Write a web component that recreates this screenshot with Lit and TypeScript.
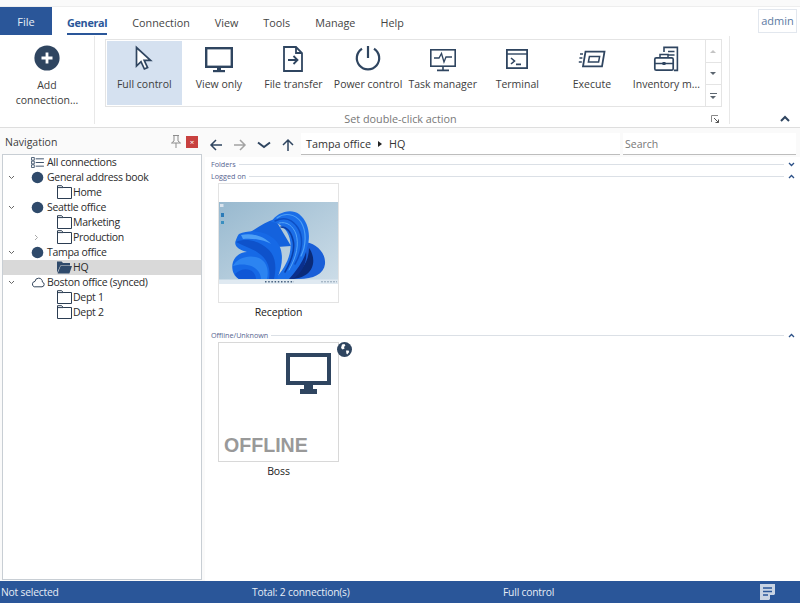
import { LitElement, html, css, svg } from "lit";
import { customElement } from "lit/decorators.js";

const INK = "#2f4560";

const actionIcons: Record<string, unknown> = {
  cursor: svg`<path d="M8.5 4.5 V23 L13 18.6 L16.4 26 L19.6 24.6 L16.2 17.4 H22.6 Z" fill="#fff" stroke="${INK}" stroke-width="1.7" stroke-linejoin="miter"/>`,
  monitor: svg`<rect x="3.2" y="5.2" width="25.6" height="18.6" fill="none" stroke="${INK}" stroke-width="2.4"/><rect x="14" y="25" width="4" height="3" fill="${INK}"/><rect x="10" y="27" width="12" height="2.2" fill="${INK}"/>`,
  file: svg`<path d="M7 4 H19 L25 10 V28 H7 Z M19 4 V10 H25" fill="none" stroke="${INK}" stroke-width="1.8"/><path d="M11 17 H20 M16.5 13 L20.5 17 L16.5 21" fill="none" stroke="${INK}" stroke-width="1.8"/>`,
  power: svg`<path d="M10 5.7 A11.2 11.2 0 1 0 22 5.7" fill="none" stroke="${INK}" stroke-width="2.2"/><path d="M16 3 V15" stroke="${INK}" stroke-width="2.2"/>`,
  task: svg`<rect x="3.8" y="6.8" width="24.4" height="16.4" fill="none" stroke="${INK}" stroke-width="1.6"/><path d="M7 15 H12 L14.5 10.5 L17 19 L19 14 H25" fill="none" stroke="${INK}" stroke-width="1.3"/><path d="M16 23 V27 M10 27.4 H22" stroke="${INK}" stroke-width="1.6"/>`,
  terminal: svg`<rect x="5.9" y="6.9" width="20.2" height="18.2" fill="none" stroke="${INK}" stroke-width="1.8"/><path d="M6 11 H26" stroke="${INK}" stroke-width="1.4"/><path d="M10 15 L13.5 18 L10 21 M15 21.4 H20" fill="none" stroke="${INK}" stroke-width="1.6"/>`,
  execute: svg`<path d="M9.5 8.6 H28.5 L26 23.4 H7 Z" fill="none" stroke="${INK}" stroke-width="1.8"/><path d="M13.4 13.6 H23.6 L22.6 19 H12.4 Z" fill="none" stroke="${INK}" stroke-width="1.5"/><path d="M4 11 H7 M3.4 15 H6.4 M2.8 19 H5.8" stroke="${INK}" stroke-width="1.3"/>`,
  inventory: svg`<path d="M14 9 V4.4 H27.4 V27.4 H24" fill="none" stroke="${INK}" stroke-width="1.6"/><path d="M18 8.5 H24.5 M18 12 H24.5" stroke="${INK}" stroke-width="1.3"/><rect x="4.8" y="14.8" width="18.4" height="12.4" rx="1.5" fill="#fff" stroke="${INK}" stroke-width="1.7"/><path d="M10 14.5 V11.4 H18 V14.5 M5 20.4 H23" fill="none" stroke="${INK}" stroke-width="1.5"/><rect x="12.5" y="19" width="3" height="3" fill="${INK}"/>`,
};

const actions = [
  { label: "Full control", icon: "cursor", active: true },
  { label: "View only", icon: "monitor" },
  { label: "File transfer", icon: "file" },
  { label: "Power control", icon: "power" },
  { label: "Task manager", icon: "task" },
  { label: "Terminal", icon: "terminal" },
  { label: "Execute", icon: "execute" },
  { label: "Inventory m...", icon: "inventory" },
];

type Node = { label: string; kind: string; twist?: string; selected?: boolean };

const tree: Node[] = [
  { label: "All connections", kind: "list" },
  { label: "General address book", kind: "dot", twist: "open" },
  { label: "Home", kind: "folder" },
  { label: "Seattle office", kind: "dot", twist: "open" },
  { label: "Marketing", kind: "folder" },
  { label: "Production", kind: "folder", twist: "closed" },
  { label: "Tampa office", kind: "dot", twist: "open" },
  { label: "HQ", kind: "folder-open", selected: true },
  { label: "Boston office (synced)", kind: "cloud", twist: "open" },
  { label: "Dept 1", kind: "folder" },
  { label: "Dept 2", kind: "folder" },
];

const nodeIcons: Record<string, unknown> = {
  list: html`<svg width="13" height="11" viewBox="0 0 14 12"><path d="M.5.5h3v3h-3zM.5 4.5h3v3h-3zM.5 8.5h3v3h-3z" fill="none" stroke="${INK}" stroke-width=".9"/><path d="M5 2h9M5 6h9M5 10h9" stroke="${INK}" stroke-width="1"/></svg>`,
  dot: html`<svg width="13" height="13" viewBox="0 0 13 13"><circle cx="6.5" cy="6.5" r="5.8" fill="#2f4a6b"/></svg>`,
  cloud: html`<svg width="14" height="11" viewBox="0 0 14 11"><path d="M3.2 9.8H11a2.4 2.4 0 0 0 .4-4.7A3.6 3.6 0 0 0 7.6 1.2 3.6 3.6 0 0 0 4 4.4 2.8 2.8 0 0 0 3.2 9.8Z" fill="none" stroke="#34465c" stroke-width="1"/></svg>`,
  folder: html`<svg width="15" height="14" viewBox="0 0 15 14"><path d="M.5 13.5V.7h4.2l1.4 1.8h8.4v11Z" fill="#fff" stroke="#2b3d52" stroke-width="1"/><path d="M.5 2.6h5.6" stroke="#2b3d52" stroke-width="1"/></svg>`,
  "folder-open": html`<svg width="15" height="14" viewBox="0 0 15 14"><path d="M0 13V1.500h4.600L6 3h7v2.400H3.400L0 13Z" fill="#2f4a6b"/><path d="M.6 13.400 3.600 6H15l-2.600 7.400Z" fill="#2f4a6b"/></svg>`,
};

@customElement("app-root")
export class AppRoot extends LitElement {
  render() {
    return html`
      <div class="tabs">
        <div class="file">File</div>
        <nav class="tab-list">
          ${["General", "Connection", "View", "Tools", "Manage", "Help"].map(
            (t, i) => html`<span class="tab ${i === 0 ? "current" : ""}">${t}</span>`
          )}
        </nav>
        <div class="admin">admin</div>
      </div>
      ${this.renderRibbon()}
      <div class="body">
        ${this.renderNav()}
        <main class="content">
          <div class="toolbar">
            ${this.renderArrows()}
            <div class="address"><span>Tampa office</span><i class="crumb"></i><span>HQ</span></div>
            <div class="search">Search</div>
          </div>
          <div class="groups">
            ${this.groupHead("Folders", false)} ${this.groupHead("Logged on", true)}
            <div class="cards">
              <figure class="card">
                <div class="tile online">${this.renderWallpaper()}</div>
                <figcaption>Reception</figcaption>
              </figure>
            </div>
            ${this.groupHead("Offline/Unknown", true)}
            <div class="cards">
              <figure class="card">
                <div class="tile offline">
                  <svg class="big-monitor" width="45" height="41" viewBox="0 0 45 41">
                    <path fill-rule="evenodd" d="M0 0H45V32H0ZM4 4V28H41V4Z" fill="${INK}" />
                    <rect x="18" y="32" width="9" height="5" fill="${INK}" />
                    <rect x="14" y="36" width="17" height="5" fill="${INK}" />
                  </svg>
                  <span class="offline-text">OFFLINE</span>
                  <svg class="globe" width="15" height="15" viewBox="0 0 15 15">
                    <circle cx="7.5" cy="7.5" r="7.5" fill="${INK}" />
                    <path d="M5 2.6 7.4 2 8.4 3.4 7 5 7.6 6.4 5.600 7.400 4 6ZM9 8.600 11.600 8.400l.6 1.600-2 2.400-.8-.8Z" fill="#fff" />
                  </svg>
                </div>
                <figcaption>Boss</figcaption>
              </figure>
            </div>
          </div>
        </main>
      </div>
      <footer class="status">
        <span class="s1">Not selected</span>
        <span class="s2">Total: 2 connection(s)</span>
        <span class="s3">Full control</span>
        <svg class="note" width="15" height="16" viewBox="0 0 15 16">
          <path d="M0 0H15V10L9 16H0Z" fill="#c9d4e4" />
          <path d="M3 4H12M3 7.500H12M3 11H8" stroke="#2a5699" stroke-width="1.600" />
          <path d="M15 11 10 16V11Z" fill="#2a5699" />
        </svg>
      </footer>
    `;
  }

  renderRibbon() {
    return html`
      <section class="ribbon">
        <div class="add">
          <svg width="26" height="26" viewBox="0 0 26 26">
            <circle cx="13" cy="13" r="12.6" fill="#2f4560" />
            <path d="M13 7.5V18.5M7.5 13H18.5" stroke="#fff" stroke-width="2.8" />
          </svg>
          <span>Add<br />connection...</span>
        </div>
        <div class="action-group">
          <div class="gallery">
            <div class="actions">
              ${actions.map(
                (a) => html`<div class="action ${a.active ? "active" : ""}">
                  <svg width="32" height="32" viewBox="0 0 32 32">${actionIcons[a.icon]}</svg>
                  <span>${a.label}</span>
                </div>`
              )}
            </div>
            <div class="spin">
              <div><i class="up"></i></div>
              <div><i class="down"></i></div>
              <div class="more"><i class="bar"></i><i class="down"></i></div>
            </div>
          </div>
          <div class="caption">
            <span>Set double-click action</span>
            <svg class="launcher" width="8" height="8" viewBox="0 0 8 8">
              <path d="M.5 7V.5H7" fill="none" stroke="#8a8a8a" />
              <path d="M3 3 7.5 7.5M7.5 4.5v3h-3" fill="none" stroke="#555" />
            </svg>
          </div>
        </div>
        <div class="collapse">
          <svg width="10" height="7" viewBox="0 0 10 7"><path d="M1 6 5 2l4 4" fill="none" stroke="#2f4560" stroke-width="2" /></svg>
        </div>
      </section>
    `;
  }

  renderNav() {
    return html`
      <aside class="nav">
        <header class="nav-head">
          <span>Navigation</span>
          <svg width="12" height="13" viewBox="0 0 12 13">
            <path d="M3 .5H9M4 .5V6L1.5 8H10.5L8 6V.5M6 8V13" fill="none" stroke="#8d8d8d" />
          </svg>
          <div class="close">×</div>
        </header>
        <div class="tree">
          ${tree.map(
            (n) => html`<div class="row ${n.kind.startsWith("folder") ? "leaf" : "root"} ${n.selected ? "selected" : ""}">
              <span class="twist">
                ${n.twist === "open"
                  ? html`<svg width="7" height="5" viewBox="0 0 7 5"><path d="M1 1l2.5 2.5L6 1" fill="none" stroke="#666" /></svg>`
                  : n.twist === "closed"
                    ? html`<svg width="5" height="7" viewBox="0 0 5 7"><path d="M1 1l2.5 2.5L1 6" fill="none" stroke="#aaa" /></svg>`
                    : ""}
              </span>
              <span class="node-icon">${nodeIcons[n.kind]}</span>
              <span>${n.label}</span>
            </div>`
          )}
        </div>
      </aside>
    `;
  }

  renderArrows() {
    const arrow = (rot: number, col: string) =>
      html`<svg width="14" height="14" viewBox="0 0 14 14" style="transform: rotate(${rot}deg)">
        <path d="M13 7H2M7 2 2 7l5 5" fill="none" stroke="${col}" stroke-width="1.5" />
      </svg>`;
    return html`
      <div class="arrows">
        ${arrow(0, INK)} ${arrow(180, "#a3a3a3")}
        <svg width="14" height="14" viewBox="0 0 14 14"><path d="M1 4.5 7 9l6-4.5" fill="none" stroke="${INK}" stroke-width="2" /></svg>
        ${arrow(90, INK)}
      </div>
    `;
  }

  groupHead(label: string, open: boolean) {
    return html`<div class="group-head">
      <span>${label}</span><i class="rule"></i>
      <svg width="7" height="5" viewBox="0 0 7 5"><path d="${open ? "M1 4 3.5 1.5 6 4" : "M1 1 3.5 3.5 6 1"}" fill="none" stroke="#2a4f86" stroke-width="1.3" /></svg>
    </div>`;
  }

  renderWallpaper() {
    return html`<svg class="wall" width="119" height="82" viewBox="0 0 119 82">
      <defs>
        <linearGradient id="sky" x1="0" y1="0" x2="1" y2="1">
          <stop offset="0" stop-color="#98b9cf" />
          <stop offset="1" stop-color="#cddde8" />
        </linearGradient>
      </defs>
      <rect width="119" height="82" fill="url(#sky)" />
      <path d="M84 40C96 40 107 50 106 62 105 72 94 77 80 77H56C72 72 82 58 84 40Z" fill="#1a5fd8" />
      <path d="M70 77C82 70 90 60 90 46 96 54 96 66 88 72 84 75 78 77 70 77Z" fill="#0a2a78" />
      <path d="M62 77C76 68 84 56 86 44 90 58 84 70 74 77Z" fill="#0b2f8c" />
      <path d="M28 32C38 26 46 20 56 17L72 44 44 46Z" fill="#1462dd" />
      <path d="M52 20C58 10 72 6 80 12 90 20 92 34 88 46 86 56 80 66 70 77H56C70 62 76 44 68 30 64 24 58 20 52 20Z" fill="#1b6ee8" />
      <g fill="none" stroke-linecap="round">
        <path d="M58 16C66 10 76 12 82 20 88 30 87 44 82 54" stroke="#4d9ff6" stroke-width="1.2" />
        <path d="M56 19C66 14 74 18 79 26 85 36 83 50 76 62" stroke="#0d4fc4" stroke-width="1.5" />
        <path d="M60 21C68 19 74 24 77 32 80 42 78 54 70 68" stroke="#56a6f8" stroke-width="1" />
        <path d="M62 25C68 25 72 30 74 38 76 46 74 56 66 70" stroke="#0a3fa8" stroke-width="1.6" />
      </g>
      <path d="M20 32C30 28 44 28 54 36 64 44 66 58 58 77H20C14 74 12 66 14 60 16 54 22 50 28 50 20 48 14 44 17 38 18 35 19 33 20 32Z" fill="#1669e6" />
      <path d="M17 40C26 36 40 38 50 48 56 54 58 64 55 77H50C52 66 48 56 38 50 32 46 24 44 17 40Z" fill="#0e52cb" />
      <path d="M22 33C32 31 44 33 52 42 46 38 34 36 24 37Z" fill="#4d9ff6" />
      <path d="M14 64C18 56 30 52 40 56 48 60 50 68 48 77H42C42 70 36 64 28 63 22 62 18 63 14 64Z" fill="#2c84f1" />
      <path d="M16 72C22 66 30 66 34 70 36 72 37 75 37 77H20C18 76 17 74 16 72Z" fill="#0f57d6" />
      <rect x="1" y="2" width="3.5" height="3" fill="#e8eef4" opacity=".8" />
      <rect x="2" y="11" width="3" height="4" fill="#2b7bb8" />
      <rect x="2" y="19" width="3" height="3" fill="#3a8fc0" />
      <rect y="77.5" width="119" height="4.5" fill="#dfe9f1" />
      <path d="M46 79.8H75" stroke="#45607f" stroke-width="1.4" stroke-dasharray="1.5 1.7" />
      <path d="M102 79.8H118" stroke="#8fa3b6" stroke-width="1" stroke-dasharray="2 1" />
    </svg>`;
  }

  static styles = css`
    :host {
      display: flex;
      flex-direction: column;
      height: 603px;
      width: 800px;
      overflow: hidden;
      background: #fafafa;
      color: #3d3d3d;
      font-family: "Open Sans", "Noto Sans", sans-serif;
      font-size: 10.5px;
    }
    .tabs {
      display: flex;
      height: 29px;
      margin-top: 6px;
      border-top: 1px solid #eee;
      background: #fff;
      box-sizing: border-box;
      align-items: stretch;
    }
    .file {
      width: 52px;
      background: #2a5699;
      color: #e8eef6;
      display: flex;
      align-items: center;
      justify-content: center;
      font-size: 11px;
    }
    .tab-list {
      display: flex;
      gap: 25px;
      padding-left: 15px;
      flex: 1;
      font-size: 10.8px;
    }
    .tab {
      line-height: 32px;
      height: 28px;
      color: #444;
      box-sizing: border-box;
    }
    .tab.current {
      color: #2a5699;
      font-weight: 700;
      letter-spacing: -0.3px;
      border-bottom: 2px solid #2a5699;
    }
    .admin {
      align-self: flex-start;
      margin: 2px 3px 0 0;
      width: 39px;
      height: 24px;
      box-sizing: border-box;
      border: 1px solid #e2e7ee;
      color: #5b7aa3;
      font-size: 11px;
      text-align: center;
      line-height: 22px;
    }
    .ribbon {
      display: flex;
      height: 93px;
      background: #fff;
      box-sizing: border-box;
      border-bottom: 1px solid #dedede;
      padding-top: 1px;
    }
    .add {
      width: 95px;
      height: 88px;
      box-sizing: border-box;
      border-right: 1px solid #e8e8e8;
      display: flex;
      flex-direction: column;
      align-items: center;
      padding-top: 9px;
      text-align: center;
      line-height: 15px;
      gap: 7px;
    }
    .action-group {
      width: 635px;
      height: 88px;
      box-sizing: border-box;
      border-right: 1px solid #e8e8e8;
      padding: 3px 8px 0 10px;
    }
    .gallery {
      display: flex;
      height: 68px;
      box-sizing: border-box;
      border: 1px solid #e4e4e4;
      width: 617px;
    }
    .actions {
      flex: 1;
      display: flex;
      padding: 1px;
    }
    .action {
      width: 74.6px;
      display: flex;
      flex-direction: column;
      align-items: center;
      padding-top: 2px;
      white-space: nowrap;
      gap: 2px;
      line-height: 15px;
    }
    .action.active {
      background: #d5e1f0;
    }
    .spin {
      width: 16px;
      display: grid;
      grid-template-rows: 1fr 1fr 1fr;
      border-left: 1px solid #e4e4e4;
    }
    .spin > div {
      display: flex;
      flex-direction: column;
      align-items: center;
      justify-content: center;
      gap: 2px;
      border-top: 1px solid #e4e4e4;
    }
    .spin > div:first-child {
      border-top: 0;
    }
    .spin i.up {
      border: 3px solid transparent;
      border-top: 0;
      border-bottom: 3px solid #c4c4c4;
    }
    .spin i.down {
      border: 3.5px solid transparent;
      border-bottom: 0;
      border-top: 3.5px solid #5c6670;
    }
    .spin i.bar {
      width: 7px;
      height: 1px;
      background: #5c6670;
    }
    .caption {
      position: relative;
      text-align: center;
      color: #777;
      line-height: 24px;
      font-size: 10.8px;
      padding-right: 25px;
    }
    .launcher {
      position: absolute;
      right: 2px;
      top: 8px;
    }
    .collapse {
      flex: 1;
      display: flex;
      justify-content: flex-end;
      align-items: flex-end;
      padding: 0 10px 5px 0;
    }
    .body {
      flex: 1;
      display: flex;
      min-height: 0;
      padding-top: 4px;
    }
    .nav {
      width: 205px;
      padding-left: 2px;
      box-sizing: border-box;
      display: flex;
      flex-direction: column;
    }
    .nav-head {
      height: 22px;
      display: flex;
      align-items: center;
      gap: 4px;
      padding: 0 4px 2px 3px;
      font-size: 10.5px;
      width: 200px;
      box-sizing: border-box;
    }
    .nav-head span {
      flex: 1;
    }
    .close {
      width: 12px;
      height: 12px;
      background: #c8413f;
      color: #fff;
      font-size: 8px;
      line-height: 11px;
      text-align: center;
    }
    .tree {
      width: 200px;
      height: 427px;
      box-sizing: border-box;
      border: 1px solid #c8ced4;
      background: #fff;
      margin-bottom: 1px;
      color: #2b2b2b;
      letter-spacing: -0.3px;
    }
    .row {
      height: 15px;
      display: flex;
      align-items: center;
      white-space: nowrap;
      line-height: 15px;
    }
    .row.selected {
      background: #d9d9d9;
    }
    .twist {
      display: inline-flex;
      justify-content: center;
      width: 10px;
      margin-left: 3px;
    }
    .row.leaf .twist {
      margin-left: 28px;
    }
    .node-icon {
      display: inline-flex;
      justify-content: center;
      width: 15px;
      margin-left: 14px;
      margin-right: 2px;
    }
    .row.leaf .node-icon {
      margin-left: 16px;
      margin-right: 1px;
    }
    .content {
      flex: 1;
      display: flex;
      flex-direction: column;
      min-width: 0;
    }
    .toolbar {
      display: flex;
      height: 25px;
      align-items: stretch;
      padding-top: 1px;
      box-sizing: border-box;
    }
    .arrows {
      display: flex;
      align-items: center;
      gap: 10px;
      padding-left: 4px;
      width: 96px;
      box-sizing: border-box;
    }
    .address,
    .search {
      background: #fff;
      border-bottom: 1px solid #bdbdbd;
      display: flex;
      align-items: center;
      height: 22px;
      box-sizing: border-box;
      padding-left: 5px;
    }
    .address {
      width: 319px;
      gap: 7px;
      font-size: 10.8px;
      color: #333;
    }
    .crumb {
      border: 3.5px solid transparent;
      border-right: 0;
      border-left: 4px solid #222;
    }
    .search {
      margin-left: 3px;
      width: 173px;
      padding-left: 2px;
      color: #777;
    }
    .groups {
      flex: 1;
      background: #fff;
      padding: 1px 5px 0 6px;
    }
    .group-head {
      display: flex;
      align-items: center;
      gap: 3px;
      height: 12px;
      font-size: 7.2px;
      color: #55648f;
    }
    .rule {
      flex: 1;
      height: 1px;
      background: #dbe0e6;
      margin-right: 1px;
    }
    .cards {
      display: flex;
      padding: 1px 0 0 7px;
    }
    .card {
      margin: 0;
      width: 121px;
      text-align: center;
      color: #222;
      line-height: 15px;
      font-size: 10.5px;
      letter-spacing: -0.15px;
    }
    .tile {
      position: relative;
      height: 120px;
      box-sizing: border-box;
      border: 1px solid #e3e3e3;
      background: #fff;
      margin-bottom: 2px;
    }
    .tile.online {
      display: flex;
      align-items: center;
    }
    .card figcaption {
      height: 24px;
    }
    .wall {
      display: block;
    }
    .tile.offline {
      border-color: #d8d8d8;
    }
    .big-monitor {
      position: absolute;
      top: 10px;
      left: 67px;
    }
    .offline-text {
      position: absolute;
      left: 5px;
      bottom: 4px;
      font-family: "Liberation Sans", Arial, sans-serif;
      font-weight: 700;
      font-size: 19.6px;
      line-height: 24px;
      letter-spacing: 0;
      color: #999;
    }
    .globe {
      position: absolute;
      right: -14px;
      top: -1px;
    }
    .status {
      height: 22px;
      background: #2a5699;
      color: #e6edf6;
      display: flex;
      align-items: center;
      font-size: 10.3px;
      letter-spacing: -0.2px;
    }
    .s1 {
      width: 252px;
      padding-left: 1px;
      box-sizing: border-box;
    }
    .s2 {
      width: 251px;
    }
    .s3 {
      width: 257px;
    }
  `;
}
